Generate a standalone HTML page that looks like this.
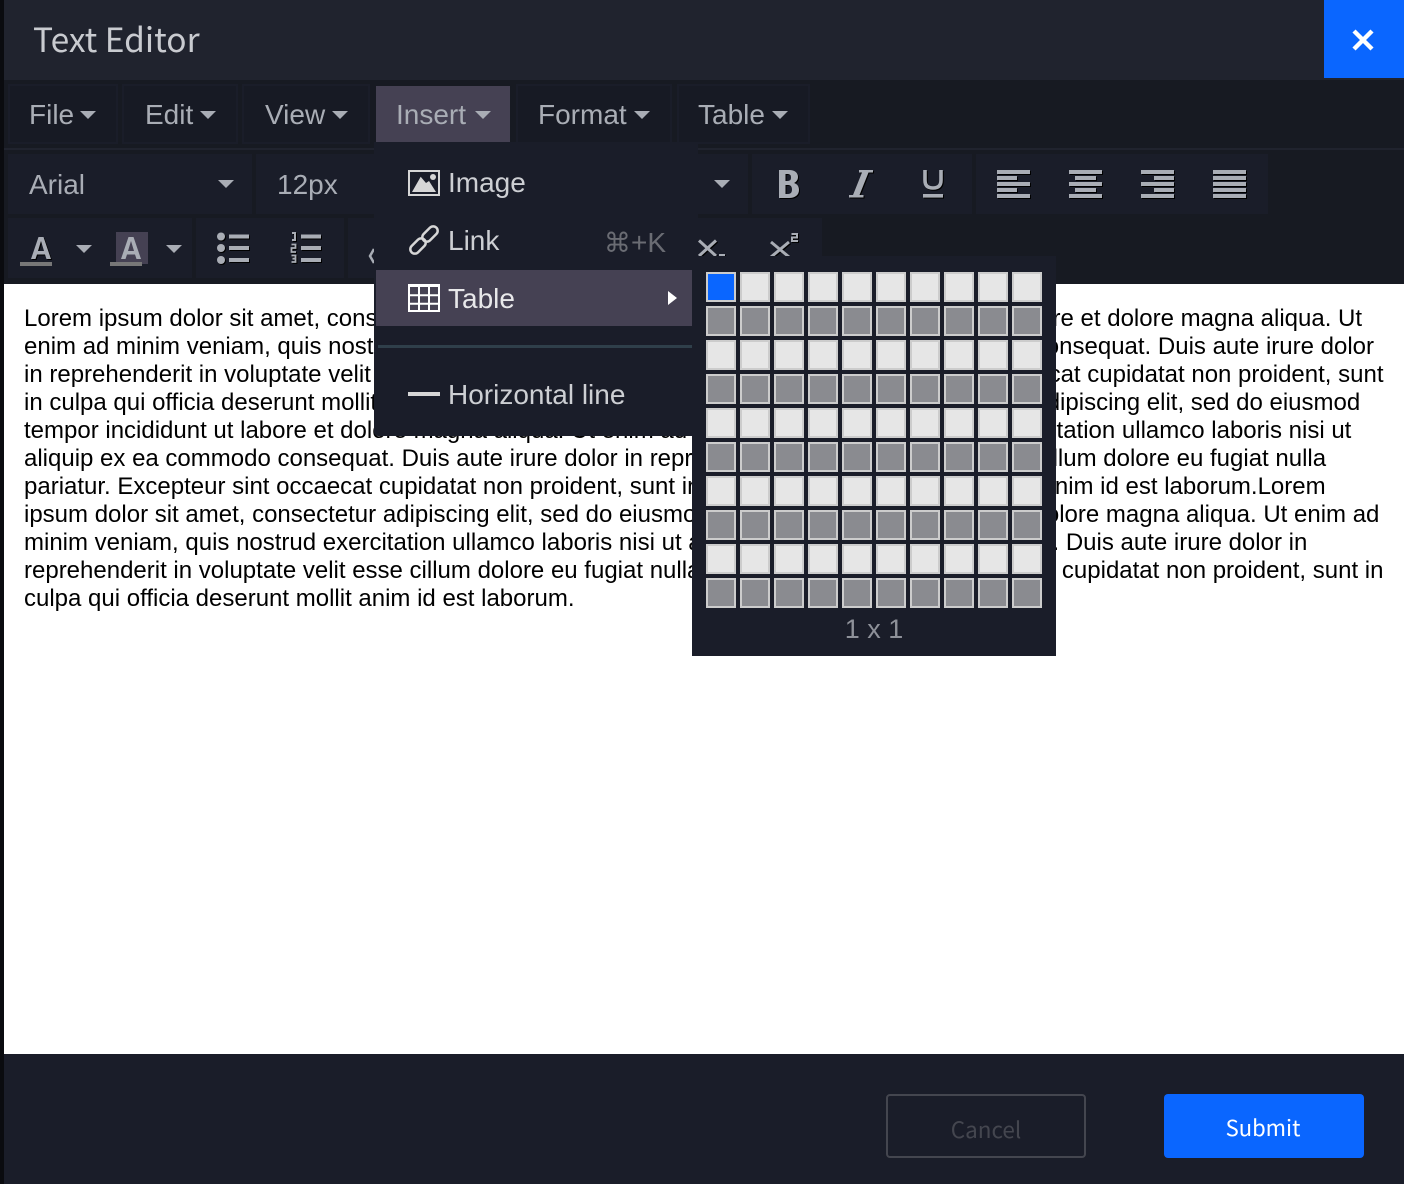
<!DOCTYPE html>
<html><head><meta charset="utf-8"><style>
*{box-sizing:border-box}
html,body{margin:0;padding:0;width:1404px;height:1184px;overflow:hidden;background:#0a0b0f}
.a{position:absolute}
body{font-family:"Liberation Sans",Arial,sans-serif;position:relative}
.n{font-family:"Noto Sans CJK JP","Liberation Sans",sans-serif}
.g{position:absolute;background:#1a1d29}
.m{position:absolute;top:84px;height:60px;background:#171a24;border:2px solid #1a1d29;color:#a9adb5;font-size:28px;line-height:58px;white-space:nowrap}
.t{position:absolute;color:#a9adb5;font-size:28px;white-space:nowrap;line-height:36px}
.c{position:absolute;width:0;height:0;border-left:8px solid transparent;border-right:8px solid transparent;border-top:8px solid #a9adb5}
.l{position:absolute;left:24px;color:#000;font-size:24px;line-height:28px;white-space:nowrap}
svg{position:absolute;overflow:visible}
.s{filter:drop-shadow(1px 1px 0 #000)}
.b{fill:#a9adb5}
.r{position:absolute;left:706px;width:336px;height:30px}
.r i{display:block;float:left;width:30px;height:30px;border:2px solid #ccc;margin-right:4px}
.d i{background:#8a8b90}
.w i{background:#e6e6e6}
</style></head><body>
<div class="a" style="left:4px;top:0;width:1400px;height:80px;background:#20232e"></div>
<div class="a n" style="left:33px;top:14px;font-size:33.500px;line-height:48px;color:#c9cbd0">Text Editor</div>
<div class="a" style="left:1324px;top:0;width:80px;height:78px;background:#0a66ff"></div>
<svg style="left:1351px;top:28px" width="24" height="24" viewBox="0 0 24 24"><path d="M3 3L21 21M21 3L3 21" stroke="#fff" stroke-width="4.400" fill="none"/></svg>

<div class="a" style="left:4px;top:80px;width:1400px;height:204px;background:#171a22"></div>
<div class="a" style="left:4px;top:148px;width:1400px;height:2px;background:#20232e"></div>

<div class="m" style="left:8px;width:110px"><span style="position:absolute;left:19px">File</span></div><div class="c" style="left:80px;top:111px"></div>
<div class="m" style="left:122px;width:116px"><span style="position:absolute;left:21px">Edit</span></div><div class="c" style="left:200px;top:111px"></div>
<div class="m" style="left:242px;width:128px"><span style="position:absolute;left:21px">View</span></div><div class="c" style="left:332px;top:111px"></div>
<div class="m" style="left:376px;width:134px;top:86px;height:56px;background:#454153;border:0;line-height:58px"><span style="position:absolute;left:20px">Insert</span></div><div class="c" style="left:475px;top:111px"></div>
<div class="m" style="left:516px;width:156px"><span style="position:absolute;left:20px">Format</span></div><div class="c" style="left:634px;top:111px"></div>
<div class="m" style="left:677px;width:133px"><span style="position:absolute;left:19px">Table</span></div><div class="c" style="left:772px;top:111px"></div>

<div class="g" style="left:8px;top:154px;width:244px;height:60px"></div>
<div class="t" style="left:29px;top:167px">Arial</div><div class="c" style="left:218px;top:180px"></div>
<div class="g" style="left:256px;top:154px;width:492px;height:60px"></div>
<div class="t" style="left:277px;top:167px">12px</div><div class="c" style="left:714px;top:180px"></div>
<div class="g" style="left:752px;top:154px;width:220px;height:60px"></div>
<div class="g" style="left:976px;top:154px;width:292px;height:60px"></div>

<svg class="s" style="left:776px;top:168px" width="26" height="32" viewBox="0 0 26 32"><path class="b" fill-rule="evenodd" d="M3 2H13C19 2 22 5 22 9C22 12 20 14 18 15C21 16 23 18 23 22C23 27 19 30 13 30H3ZM9.500 6V13H11C14 13 15 12 15 9.500C15 7 14 6 11 6ZM9.500 17V26H12C15 26 16 24 16 21.500C16 19 15 17 12 17Z"/></svg>
<svg class="s" style="left:847px;top:168px" width="26" height="32" viewBox="0 0 26 32"><path class="b" d="M12 2H26V4.500L21.500 4.500L12.500 27H16.500V29.500H2V27H6L15 4.500H12Z"/></svg>
<svg class="s" style="left:922px;top:168px" width="24" height="32" viewBox="0 0 24 32"><path d="M3 2V12C3 18 6 20 11 20C16 20 19 18 19 12V2" fill="none" stroke="#a9adb5" stroke-width="3.600"/><rect class="b" x="1" y="26" width="20" height="3.600"/></svg>

<svg class="s" style="left:997px;top:170px" width="33" height="29" viewBox="0 0 33 29"><path class="b" d="M0 0H33V4H0ZM0 6H20V10H0ZM0 12H33V16H0ZM0 18H20V22H0ZM0 24H33V28H0Z"/></svg>
<svg class="s" style="left:1069px;top:170px" width="33" height="29" viewBox="0 0 33 29"><path class="b" d="M0 0H33V4H0ZM6 6H27V10H6ZM0 12H33V16H0ZM6 18H27V22H6ZM0 24H33V28H0Z"/></svg>
<svg class="s" style="left:1141px;top:170px" width="33" height="29" viewBox="0 0 33 29"><path class="b" d="M0 0H33V4H0ZM13 6H33V10H13ZM0 12H33V16H0ZM13 18H33V22H13ZM0 24H33V28H0Z"/></svg>
<svg class="s" style="left:1213px;top:170px" width="33" height="29" viewBox="0 0 33 29"><path class="b" d="M0 0H33V4H0ZM0 6H33V10H0ZM0 12H33V16H0ZM0 18H33V22H0ZM0 24H33V28H0Z"/></svg>

<div class="g" style="left:8px;top:218px;width:184px;height:60px"></div>
<div class="g" style="left:196px;top:218px;width:148px;height:60px"></div>
<div class="g" style="left:348px;top:218px;width:474px;height:60px"></div>

<svg class="s" style="left:31px;top:237px" width="20" height="22" viewBox="0 0 20 22"><path class="b" d="M7.500 0H12.500L20 22H15.500L14 17.500H6L4.500 22H0ZM7 14H13L10 4Z"/></svg>
<div class="a" style="left:20px;top:262px;width:32px;height:4px;background:#777"></div>
<div class="c" style="left:76px;top:245px"></div>
<div class="a" style="left:116px;top:232px;width:32px;height:32px;background:#454153"></div>
<svg style="left:121px;top:237px" width="20" height="22" viewBox="0 0 20 22"><path class="b" d="M7.500 0H12.500L20 22H15.500L14 17.500H6L4.500 22H0ZM7 14H13L10 4Z"/></svg>
<div class="a" style="left:110px;top:262px;width:32px;height:4px;background:#777"></div>
<div class="c" style="left:166px;top:245px"></div>

<svg class="s" style="left:217px;top:233px" width="33" height="30" viewBox="0 0 33 30"><circle class="b" cx="4" cy="3.500" r="4"/><circle class="b" cx="4" cy="15" r="4"/><circle class="b" cx="4" cy="27" r="4"/><path class="b" d="M12 1.500H32V5.500H12ZM12 13H32V17H12ZM12 25H32V29H12Z"/></svg>
<svg class="s" style="left:290px;top:232px" width="32" height="31" viewBox="0 0 32 31"><path d="M2 1H5V8M2 8H6" fill="none" stroke="#a9adb5" stroke-width="2"/><path d="M1.500 12.500H5.500V16H1.500V20H6M1.500 23.500H5.500V30H1.500M2.500 26.700H5.500" fill="none" stroke="#a9adb5" stroke-width="1.800"/><path class="b" d="M11 2.500H31V6.500H11ZM11 14H31V18H11ZM11 26H31V30H11Z"/></svg>
<svg style="left:369px;top:248px" width="6" height="16" viewBox="0 0 6 16"><path d="M5 1L1 8L5 15" fill="none" stroke="#a9adb5" stroke-width="2.500"/></svg>
<svg class="s" style="left:698px;top:238px" width="28" height="22" viewBox="0 0 28 22"><path d="M1 2.500L18 18M18 2.500L1 18" stroke="#a9adb5" stroke-width="3" fill="none"/><rect class="b" x="21" y="16" width="6" height="2"/></svg>
<svg class="s" style="left:770px;top:230px" width="30" height="30" viewBox="0 0 30 30"><path d="M1 12L19 27M19 12L1 27" stroke="#a9adb5" stroke-width="3" fill="none"/><path d="M21.500 4H27V7.500H22V11H28" stroke="#a9adb5" stroke-width="2" fill="none"/></svg>

<div class="a" style="left:4px;top:284px;width:1400px;height:770px;background:#fff"></div>
<div class="l" style="top:305px">Lorem ipsum dolor sit amet, consectetur adipiscing elit, sed do eiusmod tempor incididunt ut labore et dolore magna aliqua. Ut</div>
<div class="l" style="top:333px">enim ad minim veniam, quis nostrud exercitation ullamco laboris nisi ut aliquip ex ea commodo consequat. Duis aute irure dolor</div>
<div class="l" style="top:361px">in reprehenderit in voluptate velit esse cillum dolore eu fugiat nulla pariatur. Excepteur sint occaecat cupidatat non proident, sunt</div>
<div class="l" style="top:389px">in culpa qui officia deserunt mollit anim id est laborum.Lorem ipsum dolor sit amet, consectetur adipiscing elit, sed do eiusmod</div>
<div class="l" style="top:417px">tempor incididunt ut labore et dolore magna aliqua. Ut enim ad minim veniam, quis nostrud exercitation ullamco laboris nisi ut</div>
<div class="l" style="top:445px">aliquip ex ea commodo consequat. Duis aute irure dolor in reprehenderit in voluptate velit esse cillum dolore eu fugiat nulla</div>
<div class="l" style="top:473px">pariatur. Excepteur sint occaecat cupidatat non proident, sunt in culpa qui officia deserunt mollit anim id est laborum.Lorem</div>
<div class="l" style="top:501px">ipsum dolor sit amet, consectetur adipiscing elit, sed do eiusmod tempor incididunt ut labore et dolore magna aliqua. Ut enim ad</div>
<div class="l" style="top:529px">minim veniam, quis nostrud exercitation ullamco laboris nisi ut aliquip ex ea commodo consequat. Duis aute irure dolor in</div>
<div class="l" style="top:557px">reprehenderit in voluptate velit esse cillum dolore eu fugiat nulla pariatur. Excepteur sint occaecat cupidatat non proident, sunt in</div>
<div class="l" style="top:585px">culpa qui officia deserunt mollit anim id est laborum.</div>

<div class="a" style="left:374px;top:142px;width:324px;height:294px;background:#1a1d29;border-radius:0 0 4px 4px"></div>
<div class="a" style="left:376px;top:270px;width:316px;height:56px;background:#454153"></div>
<div class="a" style="left:378px;top:345px;width:314px;height:3px;background:#2f3f4a"></div>

<svg style="left:408px;top:170px" width="32" height="26" viewBox="0 0 32 26"><rect x="1" y="1" width="30" height="24" fill="none" stroke="#d6d6d6" stroke-width="2"/><path d="M4 22L12.700 6.700L18 13L21 11L28 22Z" fill="#d6d6d6"/><circle cx="25" cy="7" r="3" fill="#d6d6d6"/></svg>
<div class="t" style="left:448px;top:165px;color:#cdcfd3">Image</div>
<svg style="left:408px;top:224px" width="32" height="32" viewBox="0 0 32 32"><rect x="-9" y="-4.500" width="18" height="9" rx="4.500" transform="translate(22,10) rotate(-45)" fill="none" stroke="#d6d6d6" stroke-width="2.500"/><rect x="-9" y="-4.500" width="18" height="9" rx="4.500" transform="translate(10,22) rotate(-45)" fill="none" stroke="#d6d6d6" stroke-width="2.500"/></svg>
<div class="t" style="left:448px;top:223px;color:#cdcfd3">Link</div>
<div class="t" style="left:604px;top:225px;color:#6a6c73;font-family:'DejaVu Sans','Liberation Sans',sans-serif;font-size:27px">⌘<span style="font-family:'Liberation Sans',sans-serif;font-size:28px">+K</span></div>
<svg style="left:408px;top:284px" width="32" height="28" viewBox="0 0 32 28"><path d="M1 1H31V27H1ZM1 11.300H31M1 19.700H31M11 3V27M21 3V27" fill="none" stroke="#fff" stroke-width="2"/><rect x="1" y="1" width="30" height="2" fill="#fff"/></svg>
<div class="t" style="left:448px;top:281px;color:#e8e8ea">Table</div>
<svg style="left:668px;top:291px" width="9" height="14" viewBox="0 0 9 14"><path d="M0 0L9 7L0 14Z" fill="#fff"/></svg>
<div class="a" style="left:408px;top:392px;width:32px;height:4px;background:#d6d6d6"></div>
<div class="t" style="left:448px;top:377px;color:#cdcfd3">Horizontal line</div>

<div class="a" style="left:692px;top:256px;width:364px;height:400px;background:#1a1d29"></div>
<div class="r w" style="top:272px"><i style="background:#0a66ff"></i><i></i><i></i><i></i><i></i><i></i><i></i><i></i><i></i><i style="margin:0"></i></div>
<div class="r d" style="top:306px"><i></i><i></i><i></i><i></i><i></i><i></i><i></i><i></i><i></i><i style="margin:0"></i></div>
<div class="r w" style="top:340px"><i></i><i></i><i></i><i></i><i></i><i></i><i></i><i></i><i></i><i style="margin:0"></i></div>
<div class="r d" style="top:374px"><i></i><i></i><i></i><i></i><i></i><i></i><i></i><i></i><i></i><i style="margin:0"></i></div>
<div class="r w" style="top:408px"><i></i><i></i><i></i><i></i><i></i><i></i><i></i><i></i><i></i><i style="margin:0"></i></div>
<div class="r d" style="top:442px"><i></i><i></i><i></i><i></i><i></i><i></i><i></i><i></i><i></i><i style="margin:0"></i></div>
<div class="r w" style="top:476px"><i></i><i></i><i></i><i></i><i></i><i></i><i></i><i></i><i></i><i style="margin:0"></i></div>
<div class="r d" style="top:510px"><i></i><i></i><i></i><i></i><i></i><i></i><i></i><i></i><i></i><i style="margin:0"></i></div>
<div class="r w" style="top:544px"><i></i><i></i><i></i><i></i><i></i><i></i><i></i><i></i><i></i><i style="margin:0"></i></div>
<div class="r d" style="top:578px"><i></i><i></i><i></i><i></i><i></i><i></i><i></i><i></i><i></i><i style="margin:0"></i></div>
<div class="t" style="left:692px;width:364px;text-align:center;top:611px;color:#8e9199;font-size:27px">1 x 1</div>

<div class="a" style="left:4px;top:1054px;width:1400px;height:130px;background:#1a1d29"></div>
<div class="a n" style="left:886px;top:1094px;width:200px;height:64px;border:2px solid #44464f;border-radius:4px;color:#44464f;font-size:22.500px;line-height:66px;text-align:center">Cancel</div>
<div class="a n" style="left:1164px;top:1094px;width:200px;height:64px;background:#0a66ff;border-radius:4px;color:#fff;font-size:22px;line-height:66px;text-align:center;padding-right:2px">Submit</div>
</body></html>
